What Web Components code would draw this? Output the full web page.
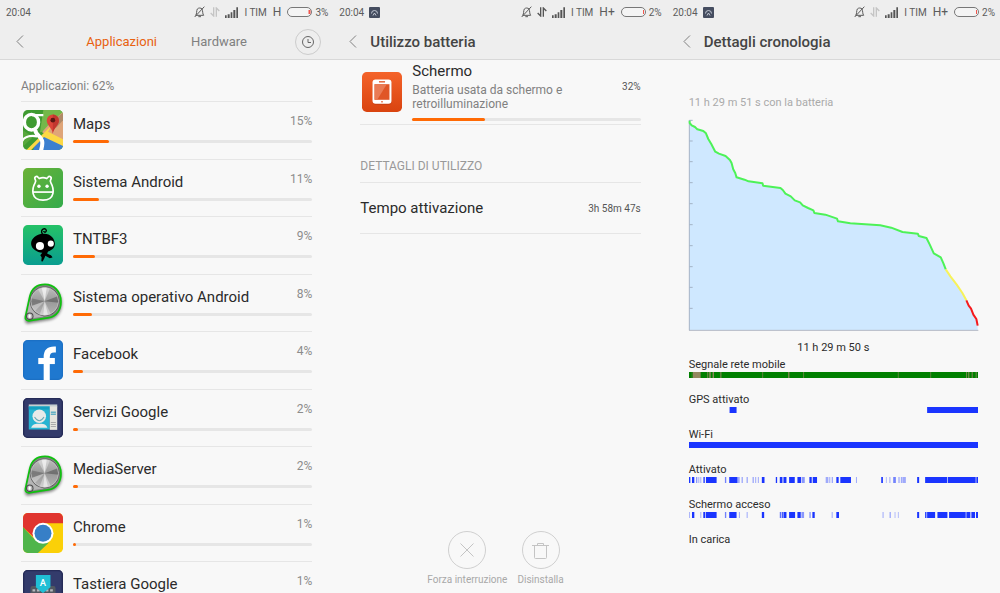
<!DOCTYPE html>
<html lang="it">
<head>
<meta charset="utf-8">
<meta name="viewport" content="width=device-width, initial-scale=1">
<title>Batteria</title>
<style>
  body {
    margin: 0;
    font-family: Roboto, "Liberation Sans", sans-serif;
    color: #2b2b2b;
    background: #f8f8f8;
  }
  main {
    display: grid;
    grid-template-columns: repeat(3, minmax(0, 1fr));
    height: 100vh;
    overflow: hidden;
  }
</style>
</head>
<body>
<main>
  <phone-screen>
    <status-bar slot="status" net="H" level="3"></status-bar>
    <tab-bar slot="nav"></tab-bar>
    <app-list></app-list>
  </phone-screen>

  <phone-screen>
    <status-bar slot="status" net="H+" level="2" notice data-on></status-bar>
    <title-bar slot="nav">Utilizzo batteria</title-bar>
    <usage-details></usage-details>
  </phone-screen>

  <phone-screen>
    <status-bar slot="status" net="H+" level="2" notice></status-bar>
    <title-bar slot="nav">Dettagli cronologia</title-bar>
    <history-details></history-details>
  </phone-screen>
</main>

<script>
const ICONS = {
  maps: `
    <defs><clipPath id="c"><rect width="118" height="118" rx="14"/></clipPath></defs>
    <g clip-path="url(#c)">
      <rect width="118" height="118" fill="#3f9b31"/>
      <path d="M60 0H118V50L50 66z" fill="#74b84a"/>
      <path d="M80 38L118 6V96L56 66z" fill="#dfa579"/>
      <path d="M96 26l22-18v22L98 52z" fill="#b08a68"/>
      <path d="M38 94l22-22 58 30v16H30z" fill="#3b7fd0"/>
      <path d="M10 118L82 48l-10-12L92 30l-18 34 44 22v20L62 80 24 118z" fill="#fcd845"/>
      <path d="M0 60l30 20L0 108z" fill="#58a83c"/>
      <g fill="none" stroke="#fff">
        <ellipse cx="25" cy="36" rx="21" ry="23" stroke-width="10"/>
        <path d="M26 15H60" stroke-width="7"/>
        <path d="M38 56c-8 12 14 20 18 34 3 10 0 20-3 30" stroke-width="12"/>
        <path d="M42 78C20 74 2 80-4 94" stroke-width="7"/>
      </g>
      <path d="M88 70C86 52 70 46 70 31a18 18 0 0136 0c0 15-16 21-18 39z" fill="#dc4439"/>
      <path d="M88 70V13a18 18 0 0118 18c0 15-16 21-18 39z" fill="#c2352e"/>
      <circle cx="88" cy="30" r="7" fill="#5a1612"/>
    </g>`,
  android: `
    <defs><linearGradient id="g" x2="1" y2="1"><stop stop-color="#6cb236"/><stop offset="1" stop-color="#33ab4c"/></linearGradient></defs>
    <rect width="118" height="118" rx="14" fill="url(#g)"/>
    <path d="M36 34c-4-8 4-12 9-6l3 3c7-3 15-3 22 0l3-3c5-6 13-2 9 6-2 3-2 6 0 9 10 18 14 52-23 52S26 61 36 43c2-3 2-6 0-9z" fill="none" stroke="#fff" stroke-width="5"/>
    <path d="M29 71H89" stroke="#fff" stroke-width="5"/>
    <circle cx="47" cy="54" r="5" fill="#fff"/><circle cx="71" cy="54" r="5" fill="#fff"/>`,
  tnt: `
    <defs><linearGradient id="g" x2="0" y2="1"><stop stop-color="#25c267"/><stop offset="1" stop-color="#0a9d90"/></linearGradient></defs>
    <rect width="118" height="118" rx="14" fill="url(#g)"/>
    <path d="M62 32c-8-6-10-16-3-20 6-3 12 2 9 7-2 4-7 2-7-1" fill="none" stroke="#000" stroke-width="4"/>
    <path d="M59 26c20-2 34 12 35 28 1 12-8 20-20 24l-3 6c8 5 14 4 16 12l-8 2-13-7-3 7-5 10-4-1 1-12-4-6 6-7c-16-1-32-12-33-25-1-16 14-30 35-31z"/>
    <circle cx="50" cy="62" r="12" fill="#fff"/><circle cx="82" cy="55" r="9" fill="#fff"/>`,
  knob: `
    <defs>
      <linearGradient id="g" x2="0" y2="1"><stop stop-color="#bdbdbd"/><stop offset=".5" stop-color="#999"/><stop offset="1" stop-color="#b4b4b4"/></linearGradient>
      <clipPath id="k"><circle cx="64" cy="54" r="41"/></clipPath>
      <filter id="s" x="-20%" y="-20%" width="150%" height="150%"><feGaussianBlur stdDeviation="4"/></filter>
    </defs>
    <path d="M66 2C40 2 26 18 20 38L6 100c-2 12 6 16 14 13l58-10c22-4 37-24 37-50C115 22 92 2 66 2z" opacity=".5" filter="url(#s)" transform="translate(0 6)"/>
    <path d="M65 4C40 4 25 18 20 40L7 100c-2 9 6 13 14 11l56-9c22-4 35-23 35-47C112 25 91 4 65 4z" fill="#858585" stroke="#0fc20f" stroke-width="5"/>
    <path d="M20 54L11 97c0 9 6 9 13 8l36-6z" fill="#b5b5b5"/>
    <circle cx="64" cy="54" r="44" fill="#5c5c5c"/>
    <g clip-path="url(#k)">
      <circle cx="64" cy="54" r="41" fill="url(#g)"/>
      <path d="M64 54L34 0H86z" fill="#fff" opacity=".35"/>
      <path d="M64 54L52 0H72z" fill="#fff" opacity=".6"/>
      <path d="M64 54L42 112H92z" fill="#fff" opacity=".35"/>
      <path d="M64 54L58 112H78z" fill="#fff" opacity=".5"/>
      <path d="M64 54L120 32V60z" fill="#333" opacity=".4"/>
      <path d="M64 54L10 42V72z" fill="#333" opacity=".3"/>
      <path d="M64 54L10 74v34z" fill="#fff" opacity=".3"/>
    </g>
    <circle cx="64" cy="54" r="41" fill="none" stroke="#d6d6d6" stroke-width="2"/>
    <circle cx="20" cy="98" r="11" fill="#4a4a4a"/><circle cx="20" cy="98" r="8" fill="#b5b5b5"/>
    <path d="M17 92l6 2-1 9-6-1z" fill="#fff"/>`,
  facebook: `
    <rect width="118" height="118" rx="14" fill="#1f78cf"/>
    <rect x="2" y="2" width="114" height="114" rx="12" fill="none" stroke="#1a6bbd" stroke-width="2"/>
    <g fill="none" stroke="#fff">
      <path d="M70 118V50Q70 28 92 28H97" stroke-width="18"/>
      <path d="M45 62H94" stroke-width="18"/>
    </g>`,
  services: `
    <rect width="118" height="118" rx="14" fill="#333b6b"/>
    <rect x="2" y="2" width="114" height="114" rx="12" fill="none" stroke="#252b57" stroke-width="4"/>
    <path d="M17 19h84v8H17z" fill="#c4ced0"/>
    <path d="M17 25h62v68H17z" fill="#27b4d2"/><path d="M17 25h62v9H17z" fill="#159fc0"/>
    <path d="M79 25h22v69H79z" fill="#e5e4de"/>
    <path d="M82 42h15m-15 6h15" stroke="#62afc5" stroke-width="4"/>
    <path d="M82 72h15m-15 6h15m-15 6h15" stroke="#aaa" stroke-width="3"/>
    <circle cx="48" cy="54" r="20" fill="#e8ebe9"/>
    <path d="M34 56q14 22 28 0" fill="none" stroke="#65a8b5" stroke-width="3"/>
    <path d="M24 88c4-12 14-12 24-12s20 0 24 12z" fill="#e8ebe9"/>`,
  chrome: `
    <defs><clipPath id="c"><rect width="118" height="118" rx="14"/></clipPath></defs>
    <g clip-path="url(#c)">
      <rect width="118" height="118" fill="#fbd008"/>
      <path d="M0 0h118v30H60L34 74 0 42z" fill="#e0352f"/>
      <path d="M0 42L36 80l40 8L44 118H0z" fill="#4fb54b"/>
      <circle cx="59" cy="60" r="31" fill="#fff"/>
      <circle cx="59" cy="60" r="25" fill="#377fc7"/>
    </g>`,
  keyboard: `
    <rect width="118" height="118" rx="14" fill="#333b6b"/>
    <rect x="2" y="2" width="114" height="114" rx="12" fill="none" stroke="#252b57" stroke-width="4"/>
    <rect x="22" y="47" width="74" height="46" rx="6" fill="#525861"/>
    <path d="M28 60h64M28 72h64" stroke="#b3b7bb" stroke-width="7" stroke-dasharray="8 5"/>
    <path d="M38 15h43v36L70 60 59 68 48 60 38 51z" fill="#20bfd5"/>
    <text x="59" y="47" text-anchor="middle" font-size="28" font-weight="500" fill="#fff">A</text>`,
  screen: `
    <defs><linearGradient id="g" x2="0" y2="1"><stop stop-color="#f4632a"/><stop offset="1" stop-color="#d9430f"/></linearGradient></defs>
    <rect width="118" height="118" rx="14" fill="url(#g)"/>
    <rect x="31" y="24" width="57" height="73" rx="9" fill="#b9380d" opacity=".5"/>
    <rect x="31" y="22" width="56" height="72" rx="9" fill="#fff"/>
    <path d="M37 36h44v46H37z" fill="#e05526"/><path d="M37 36h36L45 82h-8z" fill="#ea7b55"/>
    <path d="M50 29h18" stroke="#e05526" stroke-width="4"/>
    <path d="M56 88h6" stroke="#e05526" stroke-width="3"/>`
};

class BaseElement extends HTMLElement {
  connectedCallback() {
    if (this.shadowRoot) return;
    this.attachShadow({ mode: 'open' });
    this.shadowRoot.innerHTML = `
      <style>
        * { box-sizing: border-box; margin: 0; }
        :host { display: block; box-sizing: border-box; }
        svg { display: block; }
        button { font: inherit; color: inherit; border: 0; padding: 0; background: none; }
      </style>
      ${this.render()}
    `;
  }
}

class PhoneScreen extends BaseElement {
  render() {
    return `
      <style>
        :host { display: flex; flex-direction: column; min-width: 0; min-height: 0; }
        header { flex: none; height: 60px; background: #eee; border-bottom: 1px solid #d8d8d8; }
        section { flex: 1; min-height: 0; display: flex; flex-direction: column; }
        ::slotted(:not([slot])) { flex: 1; }
      </style>
      <header><slot name="status"></slot><slot name="nav"></slot></header>
      <section><slot></slot></section>
    `;
  }
}

class StatusBar extends BaseElement {
  render() {
    const arrows = this.hasAttribute('data-on') ? '#555' : '#c4c4c4';
    const notice = `
      <svg width="11" height="11" viewBox="0 0 22 22">
        <rect width="22" height="22" rx="2" fill="#454d60"/>
        <path d="M5 13a6 6 0 0112 0M8 17l3-5 3 5" fill="none" stroke="#c3c9d4" stroke-width="2"/>
      </svg>`;
    return `
      <style>
        :host { display: flex; align-items: center; gap: 5px; height: 24px; padding: 0 5px 0 6px; font-size: 10px; color: #5c5c5c; }
        .right { margin-left: auto; display: flex; align-items: center; gap: 6px; }
        .signal { display: flex; align-items: center; gap: 5px; }
        .net { font-size: 12px; }
        .battery { display: flex; align-items: center; gap: 3px; }
      </style>
      <span>20:04</span>
      ${this.hasAttribute('notice') ? notice : ''}
      <div class="right">
        <span class="signal">
          <svg width="11" height="12" viewBox="0 0 33 36" fill="none" stroke="#5c5c5c" stroke-width="3">
            <path d="M5 28c4-4 2-14 5-19 3-4 11-4 14 0 3 5 1 15 5 19zM13 32h8M31 2L2 33"/>
          </svg>
          <svg width="10" height="10" viewBox="0 0 30 30" fill="none" stroke="${arrows}" stroke-width="4">
            <path d="M11 1v26L2 18M19 29V3l9 9"/>
          </svg>
          <svg width="13" height="11" viewBox="0 0 39 33" fill="#555">
            <path d="M0 25h5v8H0zM8 22h6v11H8zM17 16h5v17h-5zM25 9h6v24h-6zM34 1h5v32h-5z"/>
          </svg>
        </span>
        <span>I TIM</span>
        <span class="net">${this.getAttribute('net')}</span>
        <span class="battery">
          <svg width="25" height="10" viewBox="0 0 50 20">
            <rect x="1" y="1" width="48" height="18" rx="9" fill="#f4f4f4" stroke="#777" stroke-width="2"/>
            <path d="M45 6v8" stroke="#f0574e" stroke-width="${this.getAttribute('level') === '3' ? 4 : 2}"/>
          </svg>
          <span>${this.getAttribute('level')}%</span>
        </span>
      </div>
    `;
  }
}

const CHEVRON = `
  <svg width="8" height="13" viewBox="0 0 16 26" fill="none" stroke="#808080" stroke-width="2">
    <path d="M14 1L2 13l12 12"/>
  </svg>`;

class TabBar extends BaseElement {
  render() {
    return `
      <style>
        :host { display: grid; grid-template-columns: 1fr auto 1fr; align-items: center; height: 35px; padding: 0 12px; font-size: 13px; color: #808080; }
        .back { padding-left: 4px; justify-self: start; }
        [role=tablist] { display: flex; gap: 34px; }
        [aria-selected=true] { color: #e8610f; }
        .history { justify-self: end; width: 26px; height: 26px; border: 1px solid #ccc; border-radius: 50%; display: grid; place-items: center; }
      </style>
      <button class="back" aria-label="Indietro">${CHEVRON}</button>
      <div role="tablist">
        <button role="tab" aria-selected="true">Applicazioni</button>
        <button role="tab" aria-selected="false">Hardware</button>
      </div>
      <button class="history" aria-label="Cronologia">
        <svg width="12" height="12" viewBox="0 0 24 24" fill="none" stroke="#666" stroke-width="2">
          <circle cx="12" cy="12" r="11"/><path d="M12 6v7h6"/>
        </svg>
      </button>
    `;
  }
}

class TitleBar extends BaseElement {
  render() {
    return `
      <style>
        :host { display: flex; align-items: center; gap: 13px; height: 35px; padding: 0 16px; }
        h1 { font-size: 15px; font-weight: 500; color: #444; }
      </style>
      <button aria-label="Indietro">${CHEVRON}</button>
      <h1><slot></slot></h1>
    `;
  }
}

class AppIcon extends BaseElement {
  render() {
    return `
      <style>:host { flex: none; width: 40px; height: 40px; }</style>
      <svg width="40" height="40" viewBox="0 0 118 118" overflow="visible" aria-hidden="true">${ICONS[this.getAttribute('name')]}</svg>
    `;
  }
}

class UsageBar extends BaseElement {
  render() {
    const value = this.getAttribute('value');
    return `
      <style>
        :host { height: 3px; border-radius: 2px; background: #e6e6e6; }
        div { width: ${value}%; min-width: 3px; height: 3px; border-radius: 2px; background: #ff6a05; }
      </style>
      <div role="progressbar" aria-valuenow="${value}" aria-label="Utilizzo"></div>
    `;
  }
}

class AppRow extends BaseElement {
  render() {
    const value = this.getAttribute('value');
    return `
      <style>
        :host { display: flex; gap: 10px; height: 58px; padding: 8px 0 0 2px; border-top: 1px solid #e6e6e6; }
        :host(:nth-child(even)) { height: 57px; }
        .info { flex: 1; }
        .text { display: flex; justify-content: space-between; }
        .name { padding-top: 5px; font-size: 15px; line-height: 18px; }
        .value { padding-top: 4px; font-size: 12px; line-height: 14px; color: #8c8c8c; }
        usage-bar { margin-top: 7px; }
      </style>
      <app-icon name="${this.getAttribute('icon')}"></app-icon>
      <div class="info">
        <div class="text">
          <span class="name"><slot></slot></span>
          <span class="value">${value}%</span>
        </div>
        <usage-bar value="${value}"></usage-bar>
      </div>
    `;
  }
}

class AppList extends BaseElement {
  render() {
    const apps = [
      ['maps', 15, 'Maps'],
      ['android', 11, 'Sistema Android'],
      ['tnt', 9, 'TNTBF3'],
      ['knob', 8, 'Sistema operativo Android'],
      ['facebook', 4, 'Facebook'],
      ['services', 2, 'Servizi Google'],
      ['knob', 2, 'MediaServer'],
      ['chrome', 1, 'Chrome'],
      ['keyboard', 1, 'Tastiera Google']
    ];
    return `
      <style>
        :host { padding: 17px 21px 0; }
        h2 { padding-bottom: 6px; font-size: 12px; line-height: 18px; font-weight: 400; color: #808080; }
      </style>
      <h2>Applicazioni: 62%</h2>
      <div>${apps.map(([icon, value, name]) => `<app-row icon="${icon}" value="${value}">${name}</app-row>`).join('')}</div>
    `;
  }
}

class ActionButton extends BaseElement {
  render() {
    return `
      <style>
        button { display: flex; flex-direction: column; align-items: center; gap: 4px; font-size: 10px; line-height: 14px; color: #a8a8a8; }
        .ring { display: grid; place-items: center; width: 38px; height: 38px; border: 1px solid #d0d0d0; border-radius: 50%; }
      </style>
      <button disabled>
        <span class="ring"><slot name="icon"></slot></span>
        <span><slot></slot></span>
      </button>
    `;
  }
}

class UsageDetails extends BaseElement {
  render() {
    return `
      <style>
        :host { display: flex; flex-direction: column; padding: 1px 26px 6px 27px; }
        .app { display: flex; padding: 0 0 3px 2px; gap: 10px; border-bottom: 1px solid #e6e6e6; }
        app-icon { margin-top: 11px; }
        .info { flex: 1; }
        .text { display: flex; justify-content: space-between; }
        h2 { font-size: 15px; line-height: 20px; font-weight: 400; }
        p { margin-top: 2px; max-width: 160px; font-size: 12px; line-height: 14px; color: #808080; }
        .value { padding-top: 19px; font-size: 10px; line-height: 14px; color: #555; }
        usage-bar { margin-top: 7px; }
        h3 { padding: 33px 0 8px; font-size: 12px; line-height: 16px; font-weight: 400; color: #999; }
        dl { display: flex; align-items: center; justify-content: space-between; height: 52px; border: solid #e6e6e6; border-width: 1px 0; }
        dt { font-size: 15px; }
        dd { font-size: 10px; color: #555; }
        .actions { display: flex; justify-content: center; gap: 10px; margin-top: auto; padding-right: 10px; }
      </style>
      <div class="app">
        <app-icon name="screen"></app-icon>
        <div class="info">
          <div class="text">
            <div>
              <h2>Schermo</h2>
              <p>Batteria usata da schermo e retroilluminazione</p>
            </div>
            <span class="value">32%</span>
          </div>
          <usage-bar value="32"></usage-bar>
        </div>
      </div>
      <h3>DETTAGLI DI UTILIZZO</h3>
      <dl><dt>Tempo attivazione</dt><dd>3h 58m 47s</dd></dl>
      <div class="actions">
        <action-button>
          <svg slot="icon" width="14" height="14" viewBox="0 0 28 28" fill="none" stroke="#c4c4c4" stroke-width="2"><path d="M1 1l26 26m0-26L1 27"/></svg>
          Forza interruzione
        </action-button>
        <action-button>
          <svg slot="icon" width="17" height="17" viewBox="0 0 34 34" fill="none" stroke="#c4c4c4" stroke-width="2"><path d="M0 7h34M11 7V3h12v4M5 7v24q0 2 2 2h20q2 0 2-2V7"/></svg>
          Disinstalla
        </action-button>
      </div>
    `;
  }
}

class BatteryChart extends BaseElement {
  render() {
    const green = '2,2 2,9 8,16 18,21 25,28 43,33 51,40 58,57 67,72 79,95 90,101 110,108 123,120 128,129 133,148 139,159 143,172 167,179 179,184 221,190 223,197 275,204 282,210 290,221 306,229 318,241 334,247 342,256 358,264 374,271 377,279 410,284 445,296 448,304 485,310 575,316 608,323 642,336 688,341 691,348 714,354 724,374 736,400 757,412 765,430 772,448';
    const yellow = '772,448 786,469 805,494 822,519 834,541';
    const red = '834,541 841,557 848,566 855,584 864,597 868,617';
    const ticks = [1, 63, 125, 188, 251, 314, 377, 440, 502, 565];
    return `
      <style>
        svg { width: 100%; height: 211px; overflow: visible; }
        polyline, path { fill: none; stroke-width: 1; vector-effect: non-scaling-stroke; }
        polyline { stroke-width: 2; stroke-linejoin: round; }
      </style>
      <svg viewBox="0 0 870 633" preserveAspectRatio="none" role="img" aria-label="Livello batteria">
        <polygon points="${green} ${yellow} ${red} 868,631 2,631" fill="#cfe8ff"/>
        <path d="M1 0V631${ticks.map(y => `M1 ${y}h10`).join('')}" stroke="#a3b3c7"/>
        <path d="M0 631H870" stroke="#b4b9c4"/>
        <polyline points="${green}" stroke="#4df257"/>
        <polyline points="${yellow}" stroke="#f7f25a"/>
        <polyline points="${red}" stroke="#f5191c"/>
      </svg>
    `;
  }
}

class TimelineRow extends BaseElement {
  // spans: "start end [opacity]" separated by commas, on a 0-870 scale
  spans(name, color) {
    return (this.getAttribute(name) || '').split(',').filter(Boolean).map((span) => {
      const [start, end, opacity = 1] = span.trim().split(' ').map(Number);
      return `<rect x="${start}" width="${end - start}" height="6" fill="${color}" opacity="${opacity}"/>`;
    }).join('');
  }

  render() {
    return `
      <style>
        :host { height: 35px; font-size: 11px; line-height: 15px; }
        svg { width: 100%; height: 6px; }
      </style>
      <div><slot></slot></div>
      <svg viewBox="0 0 870 6" preserveAspectRatio="none" aria-hidden="true">
        ${this.spans('good', '#008000')}${this.spans('weak', '#b98a78')}${this.spans('on', '#1a35ff')}
      </svg>
    `;
  }
}

class HistoryDetails extends BaseElement {
  render() {
    return `
      <style>
        :host { padding: 36px 22px 0; font-size: 11px; line-height: 14px; }
        .total { margin-bottom: 10px; color: #aaa; }
        .length { margin: 10px 0 2px; text-align: center; }
      </style>
      <p class="total">11 h 29 m 51 s con la batteria</p>
      <battery-chart></battery-chart>
      <p class="length">11 h 29 m 50 s</p>
      <timeline-row good="0 870" weak="8 11 .4,12 35 .8,54 58 .5,60 66 .6,71 75 .8,93 98 .5,220 223 .5,298 302 .7,343 346 .5,628 630 .7,726 728 .7,833 836 .6,839 843 .6,850 853 .7,862 865 .6">Segnale rete mobile</timeline-row>
      <timeline-row on="122 143,716 870">GPS attivato</timeline-row>
      <timeline-row on="0 870">Wi-Fi</timeline-row>
      <timeline-row on="0 4,9 16,21 25 .5,28 31 .4,34 37 .4,43 48 .8,51 83,108 112 .6,121 146,148 152 .5,158 162 .4,173 177 .4,191 195 .4,199 202 .4,207 210 .4,219 227,261 265,273 281,284 293,301 318,326 337,339 348 .5,362 369,372 385,411 419 .4,421 425 .3,429 433 .4,443 450,455 487,502 505 .4,578 583,592 595 .3,602 606 .3,614 622 .6,629 634 .3,637 642 .4,643 652 .4,686 692,710 776,778 862,864 870">Attivato</timeline-row>
      <timeline-row on="0 2 .5,9 16,34 37 .4,43 49,51 83,108 112 .6,121 143,150 153 .4,173 177 .3,219 226,273 277 .7,279 282,284 293,301 319,326 336,338 346 .5,362 366 .5,371 378,429 432 .4,443 451,582 585 .4,603 607 .4,618 621 .3,628 631 .3,686 692,710 714,716 740,747 777,782 832,834 846,849 860,863 870">Schermo acceso</timeline-row>
      <timeline-row>In carica</timeline-row>
    `;
  }
}

customElements.define('phone-screen', PhoneScreen);
customElements.define('status-bar', StatusBar);
customElements.define('tab-bar', TabBar);
customElements.define('title-bar', TitleBar);
customElements.define('app-icon', AppIcon);
customElements.define('usage-bar', UsageBar);
customElements.define('app-row', AppRow);
customElements.define('app-list', AppList);
customElements.define('action-button', ActionButton);
customElements.define('usage-details', UsageDetails);
customElements.define('battery-chart', BatteryChart);
customElements.define('timeline-row', TimelineRow);
customElements.define('history-details', HistoryDetails);
</script>
</body>
</html>
